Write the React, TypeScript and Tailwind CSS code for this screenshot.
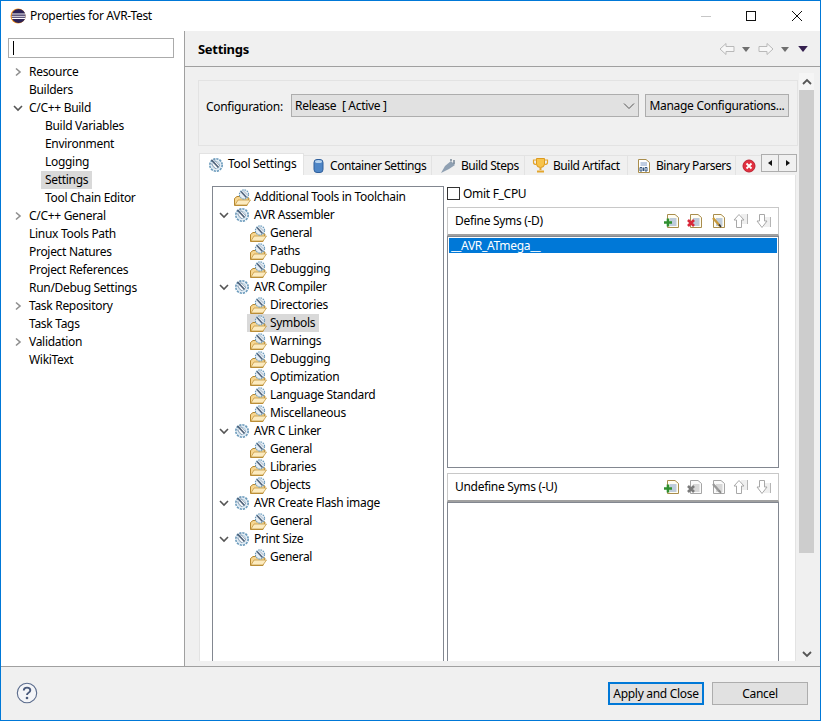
import React from "react";

const Tool = () => (
  <svg width="16" height="16" viewBox="0 0 16 16" className="shrink-0">
    <circle cx="8" cy="8" r="6.2" fill="#e4edf5" stroke="#6a9abb" strokeWidth="1.6" strokeDasharray="2.2 1" />
    <circle cx="8" cy="8" r="3.6" fill="#fff" stroke="#9cbcd1" strokeWidth="0.8" />
    <path d="M3.5 3 L10.5 10.5" stroke="#4d6078" strokeWidth="1.8" />
    <path d="M6 2.5 L12 9" stroke="#8a9bb0" strokeWidth="0.9" />
    <path d="M2.5 6 L8 12" stroke="#8a9bb0" strokeWidth="0.9" />
  </svg>
);

const Folder = () => (
  <svg width="17" height="17" viewBox="0 0 17 17" className="shrink-0">
    <path d="M0.5 16.5 V9.5 L3 7.5 H8 L15 9 L13 16.5 Z" fill="#f7d691" stroke="#b5872f" />
    <path d="M1 16 L4 11 H16.5 L13 16 Z" fill="#fcebc0" stroke="#c59a45" strokeWidth="0.8" />
    <circle cx="10" cy="5.5" r="4.6" fill="#e6eef5" stroke="#6a9abb" strokeWidth="1.1" strokeDasharray="1.6 .8" />
    <path d="M7 2.5 L12.5 8.5" stroke="#4d6078" strokeWidth="1.5" />
    <path d="M9.5 2 L14 6.5" stroke="#8a9bb0" strokeWidth="0.7" />
  </svg>
);

const Right = () => (
  <svg width="10" height="10" viewBox="0 0 10 10" className="shrink-0">
    <path d="M3 1.5 L7 5 L3 8.5" fill="none" stroke="#8f8f8f" strokeWidth="1.6" />
  </svg>
);
const Down = () => (
  <svg width="10" height="10" viewBox="0 0 10 10" className="shrink-0">
    <path d="M1 3 L5 7 L9 3" fill="none" stroke="#555" strokeWidth="1.6" />
  </svg>
);

const Doc = ({ kind, on }: { kind: "add" | "del" | "edit"; on: boolean }) => (
  <svg width="16" height="16" viewBox="0 0 16 16" className="shrink-0">
    <path d="M3.5 1.5 H11 L14.5 4.5 V14.5 H3.5 Z" fill={on ? "#fffdf2" : "#fafafa"} stroke={on ? "#a98d4c" : "#a5a5a5"} />
    <path d="M6 6 H12.5 M6 8 H12.5 M6 10 H12.5 M6 12 H12.5" stroke={on ? "#7e9ac4" : "#b5b5b5"} />
    {kind === "add" && (
      <path d="M4 5.5 V13.5 M0 9.5 H8" stroke={on ? "#2f8f2f" : "#8a8a8a"} strokeWidth="2.6" />
    )}
    {kind === "del" && (
      <path d="M1 7 L7 13 M7 7 L1 13" stroke={on ? "#d8283a" : "#7a7a7a"} strokeWidth="2.6" />
    )}
    {kind === "edit" && (
      <path d="M3 5 L10 13" stroke={on ? "#c99a3a" : "#9a9a9a"} strokeWidth="2.4" />
    )}
    {kind === "edit" && <path d="M9 11.5 L11 14" stroke={on ? "#333" : "#888"} strokeWidth="1.6" />}
  </svg>
);

const ArrowUp = () => (
  <svg width="16" height="16" viewBox="0 0 16 16" className="shrink-0">
    <rect x="8" y="1" width="6" height="10" fill="#efefef" />
    <path d="M14.5 1 V11" stroke="#b5b5b5" />
    <path d="M6 1.5 L1 7 H3.5 V14.5 H8.5 V7 H11 Z" fill="#fff" stroke="#a8a8a8" />
  </svg>
);
const ArrowDown = () => (
  <svg width="16" height="16" viewBox="0 0 16 16" className="shrink-0">
    <rect x="8" y="4" width="6" height="10" fill="#efefef" />
    <path d="M14.5 4 V14" stroke="#b5b5b5" />
    <path d="M3.5 1.5 H8.5 V8 H11 L6 14.5 L1 8 H3.5 Z" fill="#fff" stroke="#a8a8a8" />
  </svg>
);

const NavArrow = ({ flip }: { flip?: boolean }) => (
  <svg width="16" height="14" viewBox="0 0 16 14" className={flip ? "shrink-0 -scale-x-100" : "shrink-0"}>
    <path d="M1 7 L7 1.5 V4.5 H15 V9.5 H7 V12.5 Z" fill="#f7f7f7" stroke="#b9b9b9" />
  </svg>
);
const Tri = ({ color = "#6f6f6f", wide = false }: { color?: string; wide?: boolean }) => (
  <svg width={wide ? 10 : 8} height={wide ? 6 : 5} viewBox="0 0 8 5" className="shrink-0">
    <path d="M0 0 H8 L4 5 Z" fill={color} />
  </svg>
);

const side: [string, number, "r" | "d" | null, boolean?][] = [
  ["Resource", 0, "r"],
  ["Builders", 0, null],
  ["C/C++ Build", 0, "d"],
  ["Build Variables", 1, null],
  ["Environment", 1, null],
  ["Logging", 1, null],
  ["Settings", 1, null, true],
  ["Tool Chain Editor", 1, null],
  ["C/C++ General", 0, "r"],
  ["Linux Tools Path", 0, null],
  ["Project Natures", 0, null],
  ["Project References", 0, null],
  ["Run/Debug Settings", 0, null],
  ["Task Repository", 0, "r"],
  ["Task Tags", 0, null],
  ["Validation", 0, "r"],
  ["WikiText", 0, null],
];

const tree: [string, "folder0" | "tool" | "folder1", boolean?][] = [
  ["Additional Tools in Toolchain", "folder0"],
  ["AVR Assembler", "tool"],
  ["General", "folder1"],
  ["Paths", "folder1"],
  ["Debugging", "folder1"],
  ["AVR Compiler", "tool"],
  ["Directories", "folder1"],
  ["Symbols", "folder1", true],
  ["Warnings", "folder1"],
  ["Debugging", "folder1"],
  ["Optimization", "folder1"],
  ["Language Standard", "folder1"],
  ["Miscellaneous", "folder1"],
  ["AVR C Linker", "tool"],
  ["General", "folder1"],
  ["Libraries", "folder1"],
  ["Objects", "folder1"],
  ["AVR Create Flash image", "tool"],
  ["General", "folder1"],
  ["Print Size", "tool"],
  ["General", "folder1"],
];

const SymSection = ({ title, on, listH, sel }: { title: string; on: boolean; listH: string; sel?: string }) => (
  <div className="flex flex-col">
    <div className="h-[29px] border border-b-2 border-[#c8c8c8] border-b-[#a0a0a0] flex items-center pl-[7px] pr-[6px]">
      <span className="flex-1 -mt-px">{title}</span>
      <div className="flex items-center gap-[7px]">
        <Doc kind="add" on />
        <Doc kind="del" on={on} />
        <Doc kind="edit" on={on} />
        <ArrowUp />
        <ArrowDown />
      </div>
    </div>
    <div className={`${listH} border border-[#828790] p-px`}>
      {sel && (
        <div className="h-[15px] bg-[#0078d7] text-white pl-[2px] flex items-center leading-none">{sel}</div>
      )}
    </div>
  </div>
);

const TabItem = ({ icon, label, w }: { icon: React.ReactNode; label: string; w: string }) => (
  <div className={`${w} h-[20px] flex items-center border-t border-r border-[#e3e3e3] bg-[#f0f0f0] whitespace-nowrap tracking-[-0.45px]`}>
    {icon}
    <span>{label}</span>
  </div>
);

export default function App() {
  return (
    <div
      className="w-[821px] h-[721px] flex flex-col overflow-hidden bg-white border border-[#0078d7] text-[12px] tracking-[-0.3px] text-black"
      style={{ fontFamily: '"Noto Sans", sans-serif' }}
    >
      <div className="h-[30px] shrink-0 flex items-center bg-white pl-[9px]">
        <svg width="16" height="16" viewBox="0 0 16 16" className="shrink-0">
          <circle cx="8" cy="8" r="7.5" fill="#f7941e" />
          <circle cx="8.6" cy="8" r="7" fill="#2c2255" />
          <path d="M2 6 H15 M1.6 8.2 H15.5 M2 10.4 H15" stroke="#fff" strokeWidth="1.1" />
        </svg>
        <span className="ml-[4px] flex-1">Properties for AVR-Test</span>
        <svg width="102" height="14" viewBox="0 0 102 14" className="mr-[17px] shrink-0">
          <path d="M0 7.5 H10" stroke="#c6c6c6" />
          <rect x="45.5" y="2.5" width="9" height="9" fill="none" stroke="#111" />
          <path d="M91 2 L101 12 M101 2 L91 12" stroke="#111" />
        </svg>
      </div>

      <div className="h-[636px] shrink-0 flex border-b border-[#a0a0a0]">
        <div className="w-[184px] shrink-0 bg-white border-r border-[#a0a0a0] pl-[7px] pt-[7px] overflow-hidden">
          <div className="w-[166px] h-[20px] border border-[#ababab] flex items-center pl-[4px]">
            <div className="w-px h-[14px] bg-black" />
          </div>
          <div className="mt-[5px]">
            {side.map(([t, lvl, ch, sel]) => (
              <div key={t} className="h-[18px] flex items-center">
                <div className="w-[14px] flex justify-center ml-[3px] mr-[4px]">
                  {ch === "r" && <Right />}
                  {ch === "d" && <Down />}
                </div>
                {sel ? (
                  <span className="h-[18px] bg-[#d9d9d9] ml-[12px] px-[4px] leading-[18px] whitespace-nowrap">{t}</span>
                ) : (
                  <span className={`${lvl ? "ml-[16px]" : ""} leading-[18px] whitespace-nowrap`}>{t}</span>
                )}
              </div>
            ))}
          </div>
        </div>

        <div className="flex-1 min-w-0 flex flex-col bg-[#f0f0f0]">
          <div className="h-[36px] shrink-0 flex items-center border-b border-[#a0a0a0] pl-[13px] pr-[12px]">
            <span className="flex-1 font-bold text-[13px] pt-[3px]">Settings</span>
            <div className="flex items-center pt-px">
              <NavArrow />
              <div className="ml-[7px]"><Tri /></div>
              <div className="ml-[8px]"><NavArrow flip /></div>
              <div className="ml-[7px]"><Tri /></div>
              <div className="ml-[9px]"><Tri color="#35204f" wide /></div>
            </div>
          </div>

          <div className="h-[600px] flex pt-[6px] pl-[13px] pr-[6px] overflow-hidden">
            <div className="w-[600px] shrink-0 flex flex-col pt-[7px] h-[588px]">
              <div className="w-[600px] h-[66px] shrink-0 border border-[#e3e3e3] flex pt-[13px] pl-[7px] pr-[8px]">
                <span className="w-[85px] h-[23px] leading-[25px]">Configuration:</span>
                <div className="w-[348px] h-[23px] bg-[#e1e1e1] border border-[#adadad] flex items-center pl-[3px] pr-[3px]">
                  <span className="flex-1 whitespace-pre">Release  [ Active ]</span>
                  <svg width="12" height="8" viewBox="0 0 12 8">
                    <path d="M1 1.5 L6 6.5 L11 1.5" fill="none" stroke="#555" strokeWidth="1" />
                  </svg>
                </div>
                <div className="ml-[6px] w-[144px] h-[23px] bg-[#e1e1e1] border border-[#adadad] flex items-center justify-center whitespace-nowrap">
                  Manage Configurations...
                </div>
              </div>

              <div className="mt-[7px] ml-px h-[22px] shrink-0 flex items-end relative">
                <div className="w-[105px] h-[22px] bg-white border border-b-0 border-[#e3e3e3] flex items-center gap-[4px] pl-[8px] whitespace-nowrap">
                  <Tool />
                  <span className="-mt-px">Tool Settings</span>
                </div>
                <TabItem
                  w="w-[128px] gap-[3px] pl-[7px]"
                  label="Container Settings"
                  icon={
                    <svg width="16" height="16" viewBox="0 0 16 16" className="shrink-0">
                      <rect x="3" y="1.5" width="9" height="13" rx="3" fill="#4f86c6" stroke="#2f5f9c" />
                      <ellipse cx="7.5" cy="3.5" rx="3.5" ry="1.5" fill="#b9d4ef" />
                    </svg>
                  }
                />
                <TabItem
                  w="w-[93px] gap-[5px] pl-[8px]"
                  label="Build Steps"
                  icon={
                    <svg width="16" height="16" viewBox="0 0 16 16" className="shrink-0">
                      <path d="M1 15 L5 8 L11 3 L15 7 L9 11 Z" fill="#8fa0b2" />
                      <path d="M11 1 V3 M14 2 V4 M15 5 H13" stroke="#6f8091" strokeWidth="1.4" />
                    </svg>
                  }
                />
                <TabItem
                  w="w-[103px] gap-[4px] pl-[7px]"
                  label="Build Artifact"
                  icon={
                    <svg width="17" height="17" viewBox="0 0 17 17" className="shrink-0">
                      <path d="M4.5 1.5 H12.5 V7 Q12.5 10.5 8.5 10.5 Q4.5 10.5 4.5 7 Z" fill="#f7c34a" stroke="#dd9a1e" />
                      <path d="M4.5 3 H1.5 V5.5 Q1.5 7.5 4.5 7.5 M12.5 3 H15.5 V5.5 Q15.5 7.5 12.5 7.5" fill="none" stroke="#e3a52c" strokeWidth="1.2" />
                      <path d="M8.5 10.5 V13 M5 14.5 H12" stroke="#e3a52c" strokeWidth="2" />
                    </svg>
                  }
                />
                <TabItem
                  w="w-[108px] gap-[4px] pl-[8px]"
                  label="Binary Parsers"
                  icon={
                    <svg width="16" height="16" viewBox="0 0 16 16" className="shrink-0">
                      <path d="M2.5 1.5 H10 L13.5 4.5 V14.5 H2.5 Z" fill="#fff" stroke="#a98d4c" />
                      <path d="M4.5 5 H11 M4.5 7 H11" stroke="#7e9ac4" />
                      <path d="M4 9.5 H6 V13 H4 Z M9 9.5 H11 V13 H9 Z M7.5 9.5 V13" fill="none" stroke="#33557f" />
                    </svg>
                  }
                />
                <div className="w-[26px] h-[20px] flex items-center pl-[6px] border-t border-[#e3e3e3] bg-[#f0f0f0]">
                  <svg width="14" height="14" viewBox="0 0 14 14">
                    <circle cx="7" cy="7" r="6" fill="#e2303f" stroke="#bb2030" />
                    <path d="M4.5 4.5 L9.5 9.5 M9.5 4.5 L4.5 9.5" stroke="#fff" strokeWidth="1.8" />
                  </svg>
                </div>
                <div className="absolute right-px top-px flex">
                  <div className="w-[18px] h-[18px] border border-[#adadad] bg-[#f0f0f0] flex items-center justify-center">
                    <svg width="4" height="6" viewBox="0 0 4 6"><path d="M4 0 V6 L0 3 Z" fill="#111" /></svg>
                  </div>
                  <div className="w-[18px] h-[18px] border border-l-0 border-[#adadad] bg-[#f0f0f0] flex items-center justify-center">
                    <svg width="4" height="6" viewBox="0 0 4 6"><path d="M0 0 V6 L4 3 Z" fill="#111" /></svg>
                  </div>
                </div>
              </div>

              <div className="ml-px w-[597px] flex-1 min-h-0 bg-white border-x border-[#e3e3e3] flex pt-[11px] pl-[12px] overflow-hidden">
                <div className="w-[232px] shrink-0 border border-[#828790] border-b-0 pt-[1px] overflow-hidden">
                  {tree.map(([t, k, sel], i) => {
                    if (sel) {
                      return (
                        <div key={i} className="h-[18px] flex">
                          <div className="w-[34px]" />
                          <div className="w-[72px] bg-[#d9d9d9] flex items-center pl-[3px]">
                            <Folder />
                            <span className="ml-[3px] leading-[18px]">{t}</span>
                          </div>
                        </div>
                      );
                    }
                    return (
                      <div key={i} className="h-[18px] flex items-center">
                        {k === "tool" && (
                          <div className="ml-[6px] w-[15px] flex justify-start"><Down /></div>
                        )}
                        {k === "folder0" && <div className="w-[21px]" />}
                        {k === "folder1" && <div className="w-[37px]" />}
                        {k === "tool" ? <Tool /> : <Folder />}
                        <span className={`${k === "tool" ? "ml-[4px]" : "ml-[3px]"} whitespace-nowrap leading-[18px]`}>{t}</span>
                      </div>
                    );
                  })}
                </div>
                <div className="ml-[3px] w-[332px] shrink-0 flex flex-col overflow-hidden">
                  <div className="h-[21px] shrink-0 flex items-start">
                    <div className="w-[13px] h-[13px] mt-px border border-[#333] bg-white" />
                    <span className="ml-[3px] leading-[15px]">Omit F_CPU</span>
                  </div>
                  <SymSection title="Define Syms (-D)" on listH="h-[232px]" sel="__AVR_ATmega__" />
                  <div className="h-[5px] shrink-0" />
                  <SymSection title="Undefine Syms (-U)" on={false} listH="h-[170px]" />
                </div>
              </div>
            </div>

            <div className="ml-px w-[15px] h-[589px] shrink-0 flex flex-col bg-[#f0f0f0]">
              <div className="h-[17px] shrink-0 flex items-center justify-center bg-[#f5f5f5]">
                <svg width="10" height="8" viewBox="0 0 10 8"><path d="M1 6 L5 2 L9 6" fill="none" stroke="#555" strokeWidth="1.8" /></svg>
              </div>
              <div className="h-[463px] shrink-0 bg-[#cdcdcd]" />
              <div className="flex-1" />
              <div className="h-[17px] shrink-0 flex items-center justify-center">
                <svg width="10" height="8" viewBox="0 0 10 8"><path d="M1 2 L5 6 L9 2" fill="none" stroke="#555" strokeWidth="1.8" /></svg>
              </div>
            </div>
          </div>
        </div>
      </div>

      <div className="flex-1 min-h-0 bg-[#f0f0f0] flex items-center pl-[15px] pr-[12px]">
        <svg width="22" height="22" viewBox="0 0 22 22" className="shrink-0 -mt-[2px]">
          <circle cx="11" cy="11" r="9.7" fill="#f4f5f8" stroke="#5a6b8c" strokeWidth="1.1" />
          <path d="M7.8 8.6 Q7.8 5.6 11 5.6 Q14.3 5.6 14.3 8.3 Q14.3 10 12.3 11 Q11 11.8 11 13" fill="none" stroke="#4a5a7c" strokeWidth="1.9" />
          <circle cx="11" cy="16" r="1.3" fill="#4a5a7c" />
        </svg>
        <div className="flex-1" />
        <div className="w-[96px] h-[23px] bg-[#e1e1e1] border-2 border-[#0078d7] flex items-center justify-center whitespace-nowrap">
          Apply and Close
        </div>
        <div className="ml-[8px] w-[96px] h-[23px] bg-[#e1e1e1] border border-[#adadad] flex items-center justify-center">
          Cancel
        </div>
      </div>
    </div>
  );
}
